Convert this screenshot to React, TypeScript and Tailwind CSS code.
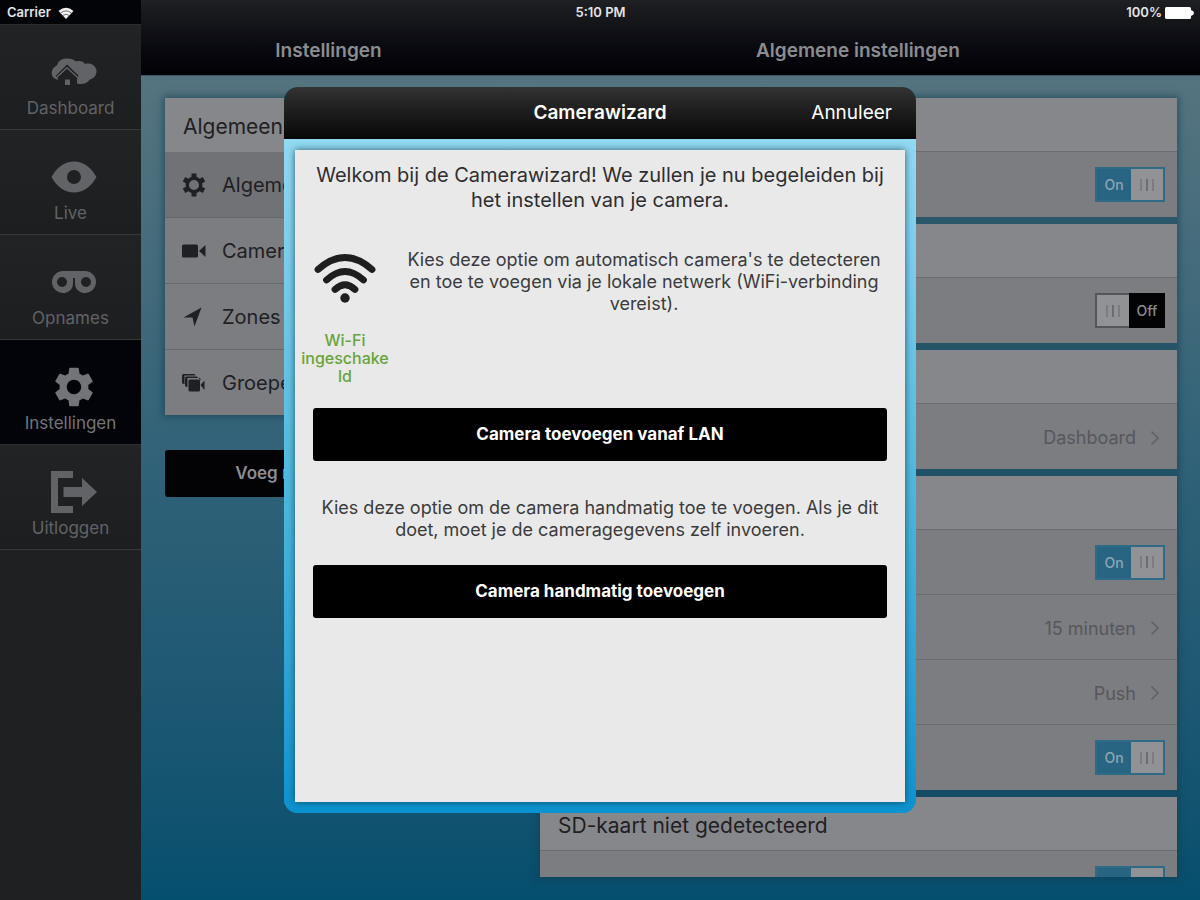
import type { ReactNode } from "react";
import { MdSettings } from "react-icons/md";

function WifiIcon({ className }: { className: string }) {
  return (
    <svg viewBox="0 0 62 50" className={className} fill="none" stroke="currentColor" strokeWidth="6.800" strokeLinecap="round" aria-hidden="true">
      <path d="M4 16.500Q31 -7.500 58 16.500" />
      <path d="M12.500 27Q31 10 49.500 27" />
      <path d="M21 36.500Q31 27 41 36.500" />
      <circle cx="31" cy="45" r="4.700" fill="currentColor" stroke="none" />
    </svg>
  );
}

function StatusWifiIcon() {
  return (
    <svg viewBox="0 0 18 13" className="h-[13px] w-[18px]" aria-hidden="true">
      <path fill="#f2f2f2" d="M1.500 4Q9 -2.500 16.500 4L9 12Z" />
      <path fill="none" stroke="#5a5a5c" strokeWidth="0.800" d="M3.500 6Q9 1.800 14.500 6M5.600 8.500Q9 6 12.400 8.500" />
    </svg>
  );
}

function CloudHouseIcon() {
  return (
    <svg viewBox="0 0 46 28" className="h-7 w-[46px]" aria-hidden="true">
      <path
        fill="currentColor"
        d="M6 21.500C2 20.500 0 17 1 13C1.500 10 4 8.500 6 7.500C7 3 11 0.500 16 0.500C20 0.500 23 1.500 25 3.500C29 2.500 32 3 34 6C40 4.500 44 7.500 45.500 12C46 17 43 20.500 39 21.500C36 25.500 31 27 26 25.500L16 22Z"
      />
      <path fill="#1f2022" d="M16 6.500L27.500 17.500L26 19.500V28H7V20L4.500 18Z" />
      <path fill="none" stroke="currentColor" strokeWidth="1.500" d="M6 19L16 9.800L26 19" />
      <rect x="14" y="21.500" width="5" height="5.500" fill="currentColor" />
    </svg>
  );
}

function EyeIcon() {
  return (
    <svg viewBox="0 0 46 32" className="h-8 w-[46px]" aria-hidden="true">
      <path
        fill="currentColor"
        fillRule="evenodd"
        d="M0.500 16C6 6 14 0.500 23 0.500S40 6 45.500 16C40 26 32 31.500 23 31.500S6 26 0.500 16ZM23 9A7 7 0 1 0 23 23A7 7 0 1 0 23 9Z"
      />
    </svg>
  );
}

function TapeIcon() {
  return (
    <svg viewBox="0 0 46 24" className="h-6 w-[46px]" aria-hidden="true">
      <path
        fill="currentColor"
        fillRule="evenodd"
        d="M11.500 1H34.500A11 11 0 1 1 26 19.500C24.500 17.500 24 15.500 24 12.500V8H22V12.500C22 15.500 21.500 17.500 20 19.500A11 11 0 1 1 11.500 1ZM11 7A5 5 0 1 0 11 17A5 5 0 1 0 11 7ZM35 7A5 5 0 1 0 35 17A5 5 0 1 0 35 7Z"
      />
    </svg>
  );
}

function LogoutIcon() {
  return (
    <svg viewBox="0 0 46 44" className="h-11 w-[46px]" fill="currentColor" aria-hidden="true">
      <path d="M0 1H22V8H7V36H22V43H0Z" />
      <path d="M12.500 17H31V8L46 22L31 36V27H12.500Z" />
    </svg>
  );
}

function GearIcon() {
  return (
    <svg viewBox="0 0 24 24" className="size-6" fill="none" stroke="currentColor" aria-hidden="true">
      <circle cx="12" cy="12" r="6.700" strokeWidth="3.400" />
      <path strokeWidth="5" d="M12 0.500V5M12 19V23.500M2 6.250L6 8.500M18 15.500L22 17.750M2 17.750L6 15.500M18 8.500L22 6.250" />
    </svg>
  );
}

function VideoIcon() {
  return (
    <svg viewBox="0 0 24 14" className="h-[14px] w-6" fill="currentColor" aria-hidden="true">
      <rect x="0" y="0.500" width="16" height="13" rx="1.500" />
      <path d="M17 7L23.500 1V13Z" />
    </svg>
  );
}

function ArrowIcon() {
  return (
    <svg viewBox="0 0 20 20" className="size-5" fill="currentColor" aria-hidden="true">
      <path d="M19.500 0.500L12.500 19.500L10.500 10.500L1.500 10.500Z" />
    </svg>
  );
}

function GroupIcon() {
  return (
    <svg viewBox="0 0 24 20" className="h-5 w-6" fill="currentColor" aria-hidden="true">
      <path d="M0 2.500Q0 1 1.500 1H12Q13.500 1 13.500 2.500H2.500V11Q0 11 0 9.500Z" />
      <path d="M3 5Q3 3.500 4.500 3.500H14.500Q16 3.500 16 5H5.500V14Q3 14 3 12.500Z" />
      <rect x="6.500" y="6.500" width="11.500" height="12" rx="1.500" />
      <path d="M18.500 12L22.500 7.500V17Z" />
      <path d="M17 4.500L19.500 6.500H17Z" />
    </svg>
  );
}

function Chevron() {
  return (
    <svg viewBox="0 0 10 16" className="h-4 w-[10px] text-[#5f6065]" fill="none" stroke="currentColor" strokeWidth="1.500" aria-hidden="true">
      <path d="M1.500 1.500L8 8L1.500 14.500" />
    </svg>
  );
}

function NavItem({ icon, label, active = false }: { icon: ReactNode; label: string; active?: boolean }) {
  return (
    <a
      href="#"
      aria-current={active ? "page" : undefined}
      className={
        active
          ? "flex h-[105px] flex-col items-center border-b border-[#2d2e30] bg-[#030409] pt-5 text-[#737477]"
          : "flex h-[105px] flex-col items-center border-b border-[#37383a] bg-linear-to-b from-[#222325] to-[#1d1e20] pt-5 text-[#626366]"
      }
    >
      <span className="flex h-[53px] items-center justify-center pl-[7px]">{icon}</span>
      <span className="text-[17px] leading-5">{label}</span>
    </a>
  );
}

function Grip() {
  return (
    <span className="flex gap-1">
      <span className="h-3 w-0.5 bg-[#7b7c80]" />
      <span className="h-3 w-0.5 bg-[#6b6c70]" />
      <span className="h-3 w-0.5 bg-[#7b7c80]" />
    </span>
  );
}

function Toggle({ on, text }: { on: boolean; text?: string }) {
  return (
    <label
      className={
        on
          ? "relative flex h-[35px] w-[70px] shrink-0 border-2 border-[#2f6a86] bg-[#919296]"
          : "relative flex h-[35px] w-[70px] shrink-0 border-2 border-[#55565a] bg-[#919296]"
      }
    >
      <input type="checkbox" defaultChecked={on} className="absolute inset-0 size-full opacity-0" />
      {on ? (
        <>
          <span className="flex w-[34px] items-center justify-center bg-[#286582] text-[14px] font-medium text-[#8fa5b1]">{text}</span>
          <span className="flex flex-1 items-center justify-center">
            <Grip />
          </span>
        </>
      ) : (
        <>
          <span className="flex flex-1 items-center justify-center">
            <Grip />
          </span>
          <span className="-my-0.5 -mr-0.5 flex w-[36px] items-center justify-center bg-[#030306] text-[14px] font-medium text-[#8b8c8f]">{text}</span>
        </>
      )}
    </label>
  );
}

function Card({ title, children }: { title?: string; children: ReactNode }) {
  return (
    <section className="shrink-0 bg-[#7c7d81]">
      <div className="flex h-[54px] items-center border-b border-[#6b6c70] bg-[#86878b] px-[18px] pt-1 text-[21px] text-[#1f2023]">{title}</div>
      <div className="divide-y divide-[#6b6c70]">{children}</div>
    </section>
  );
}

function ValueRow({ value }: { value: string }) {
  return (
    <button type="button" className="flex h-[65px] w-full items-center justify-end gap-[14px] pt-0.5 pr-[17px] text-[18px] text-[#56575b]">
      {value}
      <Chevron />
    </button>
  );
}

function ToggleRow({ on, text }: { on: boolean; text?: string }) {
  return (
    <div className="flex h-[65px] items-center justify-end pr-3">
      <Toggle on={on} text={text} />
    </div>
  );
}

const menu = [
  { label: "Algemeen", icon: <GearIcon />, active: true },
  { label: "Camera's", icon: <VideoIcon />, active: false },
  { label: "Zones", icon: <ArrowIcon />, active: false },
  { label: "Groepen", icon: <GroupIcon />, active: false },
];

export default function App() {
  return (
    <div className="relative flex h-screen overflow-hidden bg-[#1f2022] font-['Inter','Liberation_Sans',sans-serif]">
      <div className="absolute inset-x-0 top-0 z-10 grid h-[26px] grid-cols-3 items-center pr-1.5 pl-[7px] text-[13px] font-semibold text-[#e4e4e6]">
        <span className="flex items-center gap-1.5">
          Carrier
          <StatusWifiIcon />
        </span>
        <span className="text-center">5:10 PM</span>
        <span className="flex items-center justify-end gap-[3px]">
          100%
          <svg viewBox="0 0 29 12" className="h-3 w-[29px]" fill="#ffffff" aria-hidden="true">
            <rect x="0" y="0" width="26" height="12" rx="1.500" />
            <path d="M26 3Q29 4 29 6T26 9Z" />
          </svg>
        </span>
      </div>

      <nav className="w-[141px] shrink-0 bg-[#1f2022]">
        <div className="h-[25px] border-b border-[#2b2c2e] bg-[#030408]" />
        <NavItem icon={<CloudHouseIcon />} label="Dashboard" />
        <NavItem icon={<EyeIcon />} label="Live" />
        <NavItem icon={<TapeIcon />} label="Opnames" />
        <NavItem icon={<MdSettings className="size-12" />} label="Instellingen" active />
        <NavItem icon={<LogoutIcon />} label="Uitloggen" />
      </nav>

      <div className="flex min-w-0 flex-1 flex-col">
        <header className="flex h-[76px] shrink-0 border-b border-[#3c525c] bg-linear-to-b from-[#1f2023] to-[#020206] pt-7 text-[19px] font-semibold text-[#8b8c8f]">
          <h1 className="flex w-[375px] items-center justify-center">Instellingen</h1>
          <h2 className="flex flex-1 items-center justify-center">Algemene instellingen</h2>
        </header>

        <div className="flex min-h-0 flex-1 bg-linear-to-b from-[#55747f] via-[#2e6177] to-[#054f6e] pt-[22px] pb-[23px]">
          <div className="w-[375px] px-6">
            <section className="bg-[#7c7d81] shadow-[0_0_7px_2px_rgba(20,60,78,0.6)]">
              <h3 className="flex h-[54px] items-center bg-[#86878b] px-[18px] pt-1 text-[21px] text-[#1f2023]">Algemeen</h3>
              <ul className="divide-y divide-[#66676b]">
                {menu.map((item) => (
                  <li key={item.label}>
                    <a
                      href="#"
                      className={
                        item.active
                          ? "flex h-[65px] items-center bg-[#717276] px-4 text-[20px] text-[#1f2023]"
                          : "flex h-[65px] items-center px-4 text-[20px] text-[#1f2023]"
                      }
                    >
                      <span className="flex w-[41px] items-center pl-px">{item.icon}</span>
                      {item.label}
                    </a>
                  </li>
                ))}
              </ul>
            </section>
            <button type="button" className="mt-[35px] h-[47px] w-full rounded-[3px] bg-[#030306] text-[17px] font-semibold text-[#8b8c8f]">
              Voeg nieuwe camera's
            </button>
          </div>

          <div className="flex-1 pr-[23px] pl-6">
            <div className="flex h-full flex-col gap-[7px] overflow-hidden bg-[#13455a]/55 shadow-[0_0_7px_2px_rgba(20,60,78,0.6)]">
              <Card>
                <ToggleRow on text="On" />
              </Card>
              <Card>
                <ToggleRow on={false} text="Off" />
              </Card>
              <Card>
                <ValueRow value="Dashboard" />
              </Card>
              <Card>
                <ToggleRow on text="On" />
                <ValueRow value="15 minuten" />
                <ValueRow value="Push" />
                <ToggleRow on text="On" />
              </Card>
              <Card title="SD-kaart niet gedetecteerd">
                <ToggleRow on />
              </Card>
            </div>
          </div>
        </div>
      </div>

      <div className="absolute inset-0 z-20 flex items-center justify-center">
        <div role="dialog" aria-labelledby="wizard-title" className="flex h-[726px] max-h-full w-[632px] max-w-full flex-col overflow-hidden rounded-[14px] bg-[#0a93cf]">
          <div className="grid h-[52px] shrink-0 grid-cols-[1fr_auto_1fr] items-center bg-linear-to-b from-[#333333] to-[#080808] px-6 text-[19px] text-white">
            <span />
            <h2 id="wizard-title" className="font-semibold">
              Camerawizard
            </h2>
            <button type="button" className="justify-self-end">
              Annuleer
            </button>
          </div>
          <div className="flex min-h-0 flex-1 flex-col bg-linear-to-b from-[#92d9f2] via-[#4fb9de] to-[#0a93cf] p-[11px]">
            <div className="flex-1 bg-[#e9e9e9] pt-[13px] shadow-[0_0_7px_rgba(20,50,65,0.75)]">
              <p className="px-4 text-center text-[20px] leading-[25px] text-[#2e2e30]">
                Welkom bij de Camerawizard! We zullen je nu begeleiden bij het instellen van je camera.
              </p>
              <div className="mt-9 flex px-1.5">
                <div className="flex w-[88px] shrink-0 flex-col items-center gap-7">
                  <WifiIcon className="mt-1 h-[50px] w-[62px] text-[#1e1e1e]" />
                  <p className="text-center text-[16px] leading-[18px] font-medium text-[#68a43a]">
                    Wi-Fi
                    <br />
                    ingeschake
                    <br />
                    ld
                  </p>
                </div>
                <p className="flex-1 px-3 text-center text-[18px] leading-[22px] text-[#3b3b3d]">
                  Kies deze optie om automatisch camera's te detecteren en toe te voegen via je lokale netwerk (WiFi-verbinding vereist).
                </p>
              </div>
              <div className="px-[18px]">
                <button type="button" className="mt-[23px] h-[53px] w-full rounded-[3px] bg-black text-[17px] font-bold text-white">
                  Camera toevoegen vanaf LAN
                </button>
                <p className="mt-9 text-center text-[18px] leading-[22px] text-[#3b3b3d]">
                  Kies deze optie om de camera handmatig toe te voegen. Als je dit doet, moet je de cameragegevens zelf invoeren.
                </p>
                <button type="button" className="mt-6 h-[53px] w-full rounded-[3px] bg-black text-[17px] font-bold text-white">
                  Camera handmatig toevoegen
                </button>
              </div>
            </div>
          </div>
        </div>
      </div>
    </div>
  );
}
